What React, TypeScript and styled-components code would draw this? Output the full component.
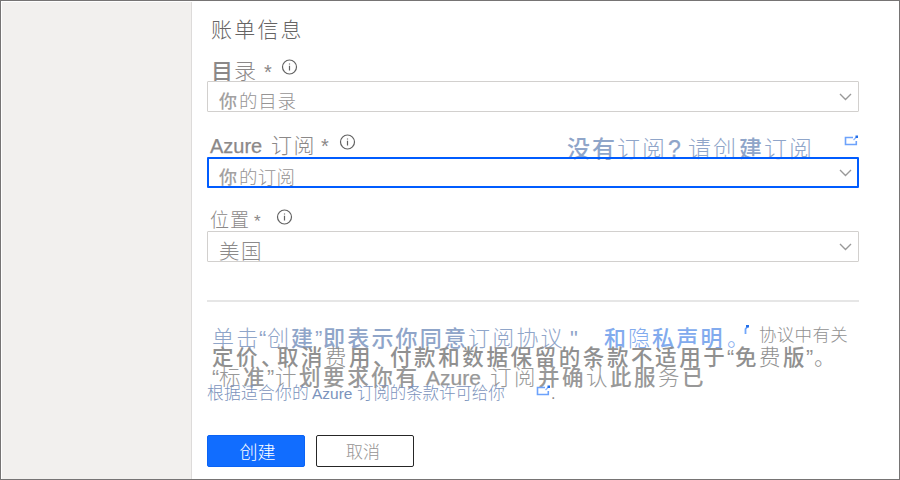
import React from "react";
import styled, { createGlobalStyle } from "styled-components";

const Global = createGlobalStyle`
  * { box-sizing: border-box; }
  body { margin: 0; background: #fff; font-family: "Noto Sans CJK SC", sans-serif; }
`;

const Frame = styled.div`
  display: flex;
  width: 900px;
  height: 480px;
  border: 1px solid #767474;
  overflow: hidden;
`;
const Sidebar = styled.aside`
  flex: none;
  width: 190px;
  margin: 1px 0 0 1px;
  background: #f2f0ee;
  border-right: 1px solid #dddbda;
`;
const Panel = styled.main`
  flex: none;
  width: 667px;
  padding-left: 15px;
  display: flex;
  flex-direction: column;
`;
const Row = styled.div<{ $h: number; $indent?: number }>`
  flex: none;
  display: flex;
  align-items: baseline;
  height: ${(p) => p.$h}px;
  padding-left: ${(p) => p.$indent ?? 0}px;
`;
const Group = styled.div<{ $top?: number; $ml?: number }>`
  flex: none;
  display: flex;
  align-self: flex-start;
  align-items: baseline;
  margin-top: ${(p) => p.$top ?? 0}px;
  margin-left: ${(p) => p.$ml ?? 0}px;
`;
const Text = styled.span<{
  $size: number;
  $pitch?: number;
  $w?: number;
  $color?: string;
  $bold?: boolean;
  $latin?: boolean;
}>`
  flex: none;
  white-space: pre;
  font-size: ${(p) => p.$size}px;
  line-height: 24px;
  letter-spacing: ${(p) => (p.$pitch ? p.$pitch - p.$size : 0)}px;
  width: ${(p) => (p.$w ? p.$w + "px" : "auto")};
  color: ${(p) => p.$color ?? "#8b8888"};
  font-weight: ${(p) => (p.$bold ? 500 : 300)};
  font-family: ${(p) => (p.$latin ? '"Liberation Sans", ' : "")}"Noto Sans CJK SC", sans-serif;
  -webkit-text-stroke: ${(p) => (p.$bold && p.$latin ? 0.25 : 0)}px;
`;
const Select = styled.div<{ $active?: boolean }>`
  flex: none;
  display: flex;
  align-items: center;
  justify-content: space-between;
  width: 652px;
  height: 31px;
  padding: ${(p) => (p.$active ? "8px 5px 0 10px" : "7px 6px 0 11px")};
  border: ${(p) => (p.$active ? "2px solid #005cff" : "1px solid #d2d0ce")};
  border-radius: 1px;
`;
const Divider = styled.hr`
  flex: none;
  width: 652px;
  height: 2px;
  margin: 38px 0 22px;
  border: 0;
  background: #e6e6e6;
`;
const Buttons = styled.div`
  display: flex;
  gap: 11px;
`;
const Button = styled.button<{ $primary?: boolean }>`
  width: 98px;
  height: 32px;
  padding: 0 ${(p) => (p.$primary ? 0 : 4)}px 0 ${(p) => (p.$primary ? 3 : 0)}px;
  font: 300 ${(p) => (p.$primary ? 18 : 17)}px/24px "Noto Sans CJK SC", sans-serif;
  color: ${(p) => (p.$primary ? "#fff" : "#969494")};
  background: ${(p) => (p.$primary ? "#116dff" : "#fff")};
  border: 1px solid ${(p) => (p.$primary ? "#0a63f5" : "#262626")};
  border-radius: 2px;
`;
const Icon = styled.svg<{ $ml?: number; $top?: number }>`
  flex: none;
  align-self: flex-start;
  margin-left: ${(p) => p.$ml ?? 0}px;
  margin-top: ${(p) => p.$top ?? 0}px;
`;

const Info = ({ top }: { top: number }) => (
  <Icon $top={top} width="17" height="16" viewBox="0 0 17 16">
    <circle cx="8.5" cy="8" r="7" fill="none" stroke="#626262" strokeWidth="1.2" />
    <path d="M8.5 6.8V11.4M8.5 4.4V5.6" stroke="#626262" strokeWidth="1.2" />
  </Icon>
);
const Chevron = ({ top }: { top: number }) => (
  <Icon $top={top} width="13" height="8" viewBox="0 0 13 8">
    <path d="M1 1L6.5 6.4L12 1" fill="none" stroke="#999" strokeWidth="1.4" />
  </Icon>
);
const External = ({ ml, top }: { ml: number; top: number }) => (
  <Icon $ml={ml} $top={top} width="15" height="12" viewBox="0 0 15 12">
    <path d="M9 2.5H1.5V9.5H12.3V6" fill="none" stroke="#6da2fb" strokeWidth="1.6" />
    <path d="M9.5 5L13 1.5" stroke="#8bb5ff" strokeWidth="1.3" />
    <path d="M11.5 .5H14V3H11.5Z" fill="#226fe9" />
  </Icon>
);
const Spark = () => (
  <Icon width="6" height="12" viewBox="0 0 6 12">
    <path d="M1.5 10V5L4 2" fill="none" stroke="#72a7fb" strokeWidth="1.8" />
    <path d="M2 1H5V3.5H2Z" fill="#226fe9" />
  </Icon>
);

const SLATE = "#8fa5c9";
const SKY = "#82abee";

type Run = [text: string, width: number, bold?: boolean, latin?: boolean];
const Runs = ({ runs, size, pitch, color }: { runs: Run[]; size: number; pitch: number; color: string }) => (
  <>
    {runs.map(([text, width, bold, latin], i) => (
      <Text key={i} $size={size} $pitch={latin ? size : pitch} $w={width} $bold={bold} $latin={latin} $color={color}>
        {text}
      </Text>
    ))}
  </>
);

export default function App() {
  return (
    <>
      <Global />
      <Frame>
        <Sidebar />
        <Panel>
          <Row $h={58} $indent={4}>
            <Group $top={15}>
              <Text $size={21} $pitch={23.2} $color="#666464">账单信息</Text>
            </Group>
          </Row>
          <Row $h={22} $indent={4}>
            <Group $top={-2}>
              <Text $size={22} $w={23} $bold>目</Text>
              <Text $size={22} $w={30}>录</Text>
              <Text $size={20} $w={17} $latin>*</Text>
            </Group>
            <Info top={0} />
          </Row>
          <Select>
            <span>
              <Text $size={18} $pitch={20} $bold $color="#a3a1a1">你</Text>
              <Text $size={18.5} $pitch={19.3} $color="#969494">的目录</Text>
            </span>
            <Chevron top={4} />
          </Select>
          <Row $h={45} $indent={3}>
            <Group $top={20}>
              <Text $size={20} $w={61} $latin $bold>Azure</Text>
              <Text $size={21} $pitch={22.5} $w={50}>订阅</Text>
              <Text $size={20} $w={18} $latin>*</Text>
            </Group>
            <Info top={22} />
            <Group $top={23} $ml={211}>
              <Runs
                size={23}
                pitch={25}
                color={SLATE}
                runs={[["没有", 50, true], ["订阅", 51], ["?", 20, true, true], ["请创", 51], ["建", 25, true], ["订阅", 52]]}
              />
            </Group>
            <External ml={28} top={23} />
          </Row>
          <Select $active>
            <span>
              <Text $size={18} $pitch={20} $bold $color="#a3a1a1">你</Text>
              <Text $size={18.5} $pitch={18.8} $color="#969494">的订阅</Text>
            </span>
            <Chevron top={2} />
          </Select>
          <Row $h={43} $indent={3}>
            <Group $top={19}>
              <Text $size={19} $pitch={20} $w={44}>位置</Text>
              <Text $size={17} $w={22} $latin>*</Text>
            </Group>
            <Info top={21} />
          </Row>
          <Select>
            <Text $size={20.5} $pitch={22} $color="#8c8a8a">美国</Text>
            <Chevron top={4} />
          </Select>
          <Divider />
          <Row $h={20} $indent={5}>
            <Runs
              size={22}
              pitch={24.2}
              color={SLATE}
              runs={[
                ["单击", 47], ["“", 8, false, true], ["创", 24], ["建", 24, true], ["”", 8, false, true],
                ["即表示你同意", 145, true], ["订阅协议", 102], ['"', 34, false, true],
              ]}
            />
            <Runs size={22} pitch={24.2} color={SKY} runs={[["和", 24, true], ["隐", 24], ["私声明", 75, true], ["。", 17]]} />
            <Spark />
            <Group $top={-2} $ml={9}>
              <Text $size={17.5} $pitch={17.8} $color="#919191">协议中有关</Text>
            </Group>
          </Row>
          <Row $h={20} $indent={5}>
            <Runs
              size={21.5}
              pitch={24.1}
              color="#909090"
              runs={[
                ["定价", 49, true], ["、", 16, true], ["取消", 48, true], ["费", 24], ["用", 24, true], ["、", 17, true],
                ["付款和数据保留的条款不适用于", 337, true], ["“", 8, false, true], ["免", 24, true], ["费", 24],
                ["版", 23, true], ["”", 8, false, true], ["。", 16],
              ]}
            />
          </Row>
          <Row $h={16} $indent={5}>
            <Runs
              size={21.5}
              pitch={24.1}
              color="#989898"
              runs={[
                ["“", 7, false, true], ["标", 24], ["准", 24, true], ["”", 8, false, true], ["计", 24],
                ["划要求你有", 127, true],
              ]}
            />
            <Text $size={21} $w={64} $bold $latin $color="#989898">Azure</Text>
            <Runs
              size={21.5}
              pitch={24.1}
              color="#989898"
              runs={[["订阅", 48], ["并确", 48, true], ["认", 24], ["此服", 48, true], ["务", 24], ["已", 22, true]]}
            />
          </Row>
          <Row $h={55}>
            <Runs size={16.8} pitch={17} color="#7b93bc" runs={[["根据适合你的", 105]]} />
            <Text $size={15.5} $w={45} $latin $color="#7b93bc">Azure</Text>
            <Runs size={16.5} pitch={16.4} color="#7b93bc" runs={[["订阅的条款许可给你", 179]]} />
            <External ml={0} top={5} />
            <Text $size={16} $latin>.</Text>
          </Row>
          <Buttons>
            <Button $primary>创建</Button>
            <Button>取消</Button>
          </Buttons>
        </Panel>
      </Frame>
    </>
  );
}
